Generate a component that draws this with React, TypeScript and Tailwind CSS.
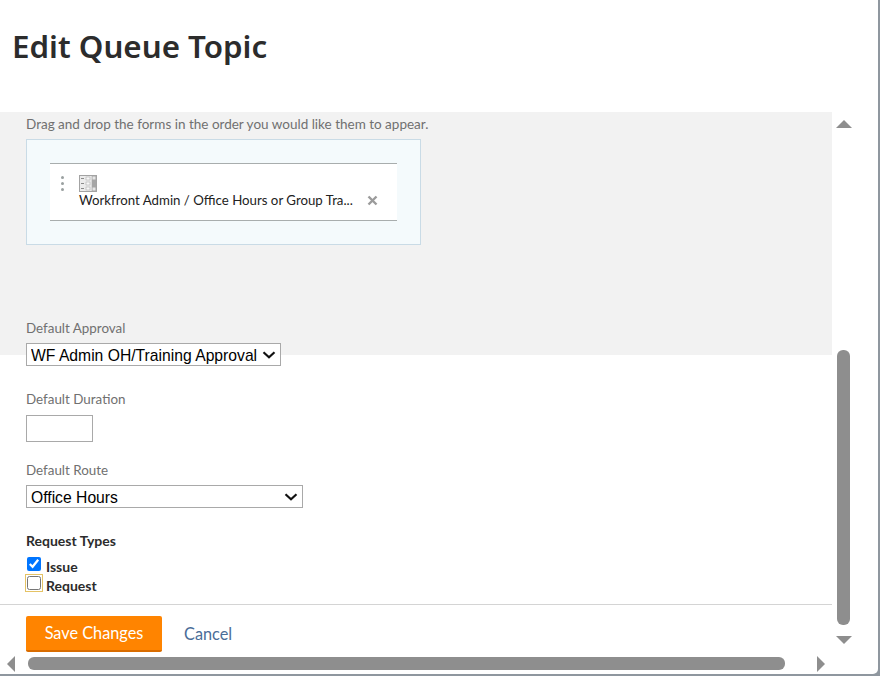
import React from "react";

const label = "block text-[13.4px] leading-[16px] text-[#707070] font-['Lato',sans-serif]";
const selectCls = "block h-[23px] w-full appearance-none bg-white border border-[#a9a9a9] pl-[4px] text-[15.7px] text-black font-['Liberation_Sans',sans-serif] rounded-none";

function FormIcon() {
  return (
    <svg width="18" height="17" viewBox="0 0 18 17" className="block">
      <rect x="0.5" y="0.5" width="17" height="16" fill="#d8d8d8" stroke="#a3a3a3" strokeWidth="1" />
      <rect x="1" y="1" width="11" height="15" fill="#ececec" />
      <rect x="13" y="1" width="4" height="15" fill="#a6a6a6" />
      <rect x="13.5" y="1.5" width="3" height="3" fill="#e6e6e6" />
      <rect x="13.5" y="12.5" width="3" height="3" fill="#e6e6e6" />
      <rect x="2" y="3" width="3" height="1" fill="#8a8a8a" />
      <rect x="7" y="2" width="4" height="3" fill="#f8f8f8" stroke="#a0a0a0" strokeWidth="0.5" />
      <rect x="2" y="8" width="3" height="1" fill="#8a8a8a" />
      <rect x="7" y="7" width="4" height="3" fill="#f8f8f8" stroke="#a0a0a0" strokeWidth="0.5" />
      <rect x="2" y="13" width="3" height="1" fill="#8a8a8a" />
      <rect x="7" y="12" width="4" height="3" fill="#f8f8f8" stroke="#a0a0a0" strokeWidth="0.5" />
    </svg>
  );
}

function Chevron() {
  return (
    <svg width="14" height="8" viewBox="0 0 14 8" className="pointer-events-none absolute right-[5px] top-[8px]">
      <path d="M1.5 1.2 L7 6.2 L12.5 1.2" fill="none" stroke="#111" strokeWidth="2.2" />
    </svg>
  );
}

export default function App() {
  return (
    <div className="relative h-[676px] w-[880px] overflow-hidden bg-[#8f979f] font-['Lato',sans-serif]">
      <div className="flex h-[674px] w-[878px] flex-col rounded-br-[5px] bg-white">
        <header className="h-[112px] shrink-0 pl-[12px] pt-[24px]">
          <h1 className="text-[31.3px] leading-[44px] font-semibold text-[#2c2c2c] font-['Noto_Sans',sans-serif]">Edit Queue Topic</h1>
        </header>
        <div className="w-[832px] flex-1">
          <section className="h-[243px] bg-[#f2f2f2] px-[26px] pt-[4px]">
            <p className="text-[13.5px] leading-[16px] text-[#707070]">Drag and drop the forms in the order you would like them to appear.</p>
            <div className="mt-[7px] h-[106px] w-[395px] border border-[#c9dbe6] bg-[#f4fafc] pl-[23px] pt-[23px]">
              <div className="relative h-[58px] w-[347px] border-y border-[#a8adad] bg-white pl-[29px] pt-[11px]">
                <span className="absolute left-[11px] top-[12px] flex flex-col gap-[3px]">
                  <i className="block h-[3px] w-[3px] rounded-full bg-[#9aa0a0]" />
                  <i className="block h-[3px] w-[3px] rounded-full bg-[#9aa0a0]" />
                  <i className="block h-[3px] w-[3px] rounded-full bg-[#9aa0a0]" />
                </span>
                <FormIcon />
                <div className="flex items-center">
                  <span className="w-[288px] text-[13.25px] leading-[16px] text-[#222]">Workfront Admin / Office Hours or Group Tra...</span>
                  <svg width="11" height="11" viewBox="0 0 11 11">
                    <path d="M1.5 1.5 L9.5 9.5 M9.5 1.5 L1.5 9.5" stroke="#9b9b9b" strokeWidth="2.4" />
                  </svg>
                </div>
              </div>
            </div>
            <label className={`${label} mt-[75px]`}>Default Approval</label>
            <div className="relative mt-[7px] w-[255px]">
              <select className={selectCls} defaultValue="a">
                <option value="a">WF Admin OH/Training Approval</option>
              </select>
              <Chevron />
            </div>
          </section>
          <div className="px-[26px]">
            <label className={`${label} mt-[36px]`}>Default Duration</label>
            <input className="mt-[8px] block h-[27px] w-[67px] border border-[#a9a9a9] bg-white" />
            <label className={`${label} mt-[20px]`}>Default Route</label>
            <div className="relative mt-[7px] w-[277px]">
              <select className={selectCls} defaultValue="o">
                <option value="o">Office Hours</option>
              </select>
              <Chevron />
            </div>
            <p className="mt-[25px] text-[14px] leading-[16px] font-bold text-[#2c2c2c]">Request Types</p>
            <div className="mt-[8px] flex h-[19px] items-center">
              <input type="checkbox" defaultChecked className="m-0 h-[14px] w-[14px] translate-x-[1px] translate-y-[-3px]" />
              <span className="ml-[6px] text-[14px] leading-[16px] font-bold text-[#2c2c2c]">Issue</span>
            </div>
            <div className="flex h-[19px] items-center">
              <input type="checkbox" className="m-0 h-[14px] w-[14px] translate-x-[1px] translate-y-[-3px] outline outline-1 outline-offset-[1px] outline-[#e5c365]" />
              <span className="ml-[6px] text-[14px] leading-[16px] font-bold text-[#2c2c2c]">Request</span>
            </div>
          </div>
        </div>
        <footer className="h-[70px] w-[832px] shrink-0 border-t border-[#d4d4d4] pl-[26px] pt-[11px]">
          <div className="flex items-center gap-[22px]">
            <button className="h-[36px] w-[136px] rounded-[2px] border-b-2 border-[#d96c00] bg-[#ff8400] text-[16.3px] text-white">Save Changes</button>
            <a className="text-[16.3px] text-[#4a6d98]">Cancel</a>
          </div>
        </footer>
      </div>

      {/* vertical scrollbar */}
      <div className="absolute left-[836px] top-[120px] h-[0] w-[0] border-x-[8px] border-b-[8px] border-x-transparent border-b-[#8e8e8e]" />
      <div className="absolute left-[837px] top-[350px] h-[275px] w-[13px] rounded-[6px] bg-[#8e8e8e]" />
      <div className="absolute left-[836px] top-[636px] h-[0] w-[0] border-x-[8px] border-t-[8px] border-x-transparent border-t-[#8e8e8e]" />

      {/* horizontal scrollbar */}
      <div className="absolute left-[7px] top-[656px] h-[0] w-[0] border-y-[8px] border-r-[8px] border-y-transparent border-r-[#8e8e8e]" />
      <div className="absolute left-[28px] top-[657px] h-[13px] w-[757px] rounded-[6px] bg-[#8e8e8e]" />
      <div className="absolute left-[817px] top-[656px] h-[0] w-[0] border-y-[8px] border-l-[8px] border-y-transparent border-l-[#8e8e8e]" />
    </div>
  );
}
